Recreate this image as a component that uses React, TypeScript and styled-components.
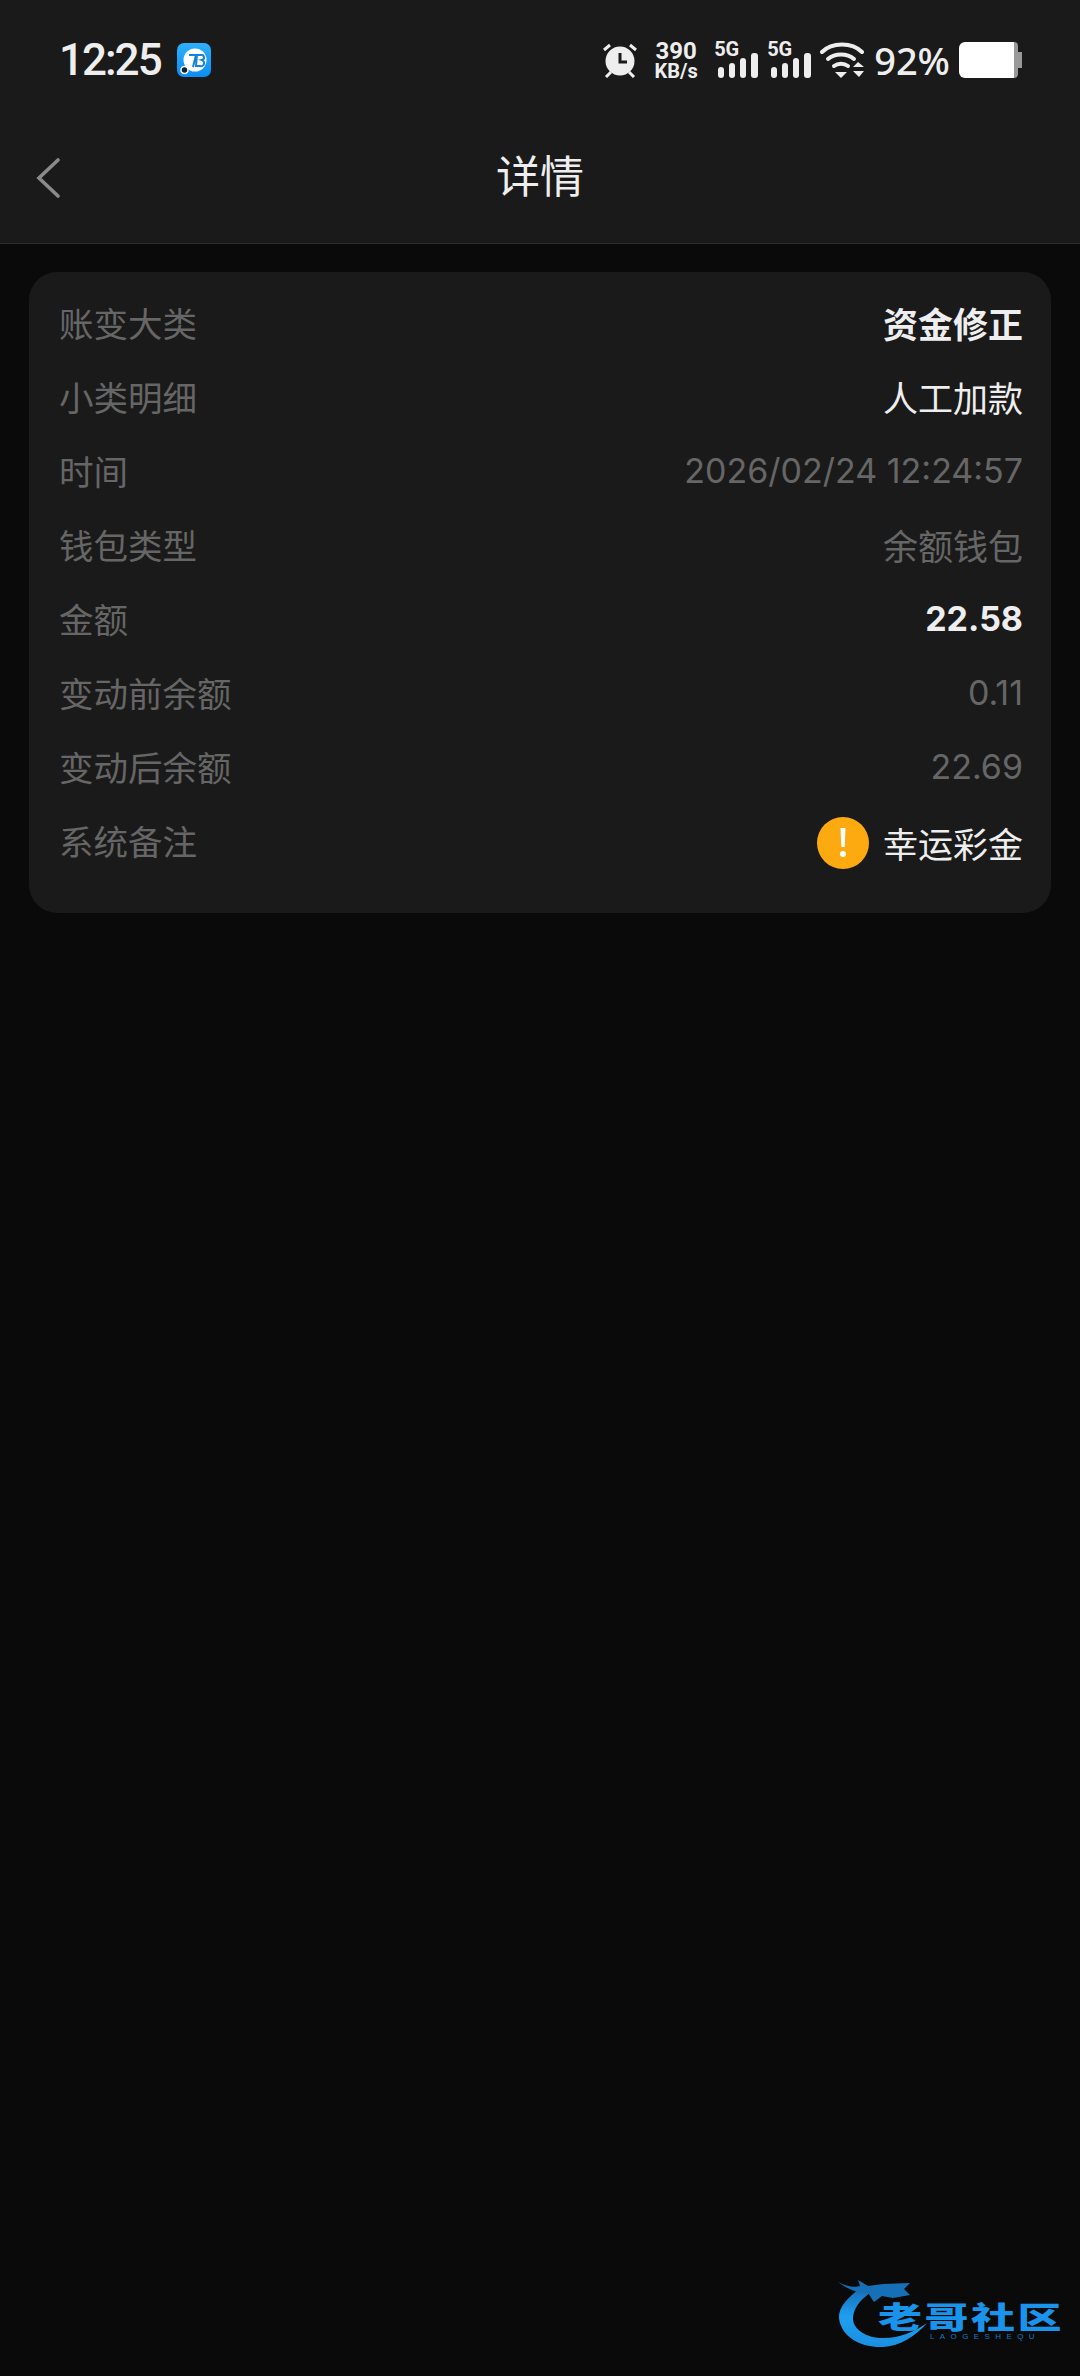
import React, { FC } from "react";
import styled, { createGlobalStyle } from "styled-components";

const CJK = `Inter, "Noto Sans CJK SC", sans-serif`;

type TRow = {
  label: string;
  value: string;
  tone?: "dim" | "light" | "strong";
  numeric?: boolean;
  warn?: boolean;
};

const rows: TRow[] = [
  { label: "账变大类", value: "资金修正", tone: "strong" },
  { label: "小类明细", value: "人工加款", tone: "light" },
  { label: "时间", value: "2026/02/24 12:24:57", numeric: true },
  { label: "钱包类型", value: "余额钱包" },
  { label: "金额", value: "22.58", tone: "strong", numeric: true },
  { label: "变动前余额", value: "0.11", numeric: true },
  { label: "变动后余额", value: "22.69", numeric: true },
  { label: "系统备注", value: "幸运彩金", tone: "light", warn: true },
];

const Signal: FC = () => (
  <SignalWrap>
    <SignalLabel>5G</SignalLabel>
    <svg width="40" height="25" viewBox="0 0 40 25">
      <rect x="0" y="14" width="6" height="11" rx="3" fill="#eee" />
      <rect x="11" y="10" width="6" height="15" rx="3" fill="#eee" />
      <rect x="22" y="5" width="6" height="20" rx="3" fill="#eee" />
      <rect x="33" y="0" width="7" height="25" rx="3" fill="#eee" />
    </svg>
  </SignalWrap>
);

const AlarmIcon: FC = () => (
  <svg width="36" height="36" viewBox="0 0 36 36">
    <circle cx="18" cy="19" r="14.5" fill="#eee" />
    <path d="M18 11v9h7" fill="none" stroke="#1a1a1a" strokeWidth="3" />
    <path
      d="M2 8l6-5M34 8l-6-5M4 35l5-5M32 35l-5-5"
      fill="none"
      stroke="#eee"
      strokeWidth="3"
    />
  </svg>
);

const WifiIcon: FC = () => (
  <svg width="45" height="36" viewBox="0 0 45 36">
    <g fill="none" stroke="#eee" strokeWidth="4" strokeLinecap="round">
      <path d="M2 10C12 0 32 0 42 10" />
      <path d="M8 17c7-6 19-6 26 0" />
      <path d="M14 24c4-3 10-3 14 0" />
    </g>
    <path d="M15 30h12l-6 6z" fill="#eee" />
    <path d="M33 25l5-5 6 5zM33 29h11l-5 6z" fill="#eee" />
  </svg>
);

const BatteryIcon: FC = () => (
  <svg width="63" height="36" viewBox="0 0 63 36">
    <path d="M50 0h5a4 4 0 0 1 4 4v6h4v16h-4v6a4 4 0 0 1-4 4h-5z" fill="#999" />
    <path
      d="M6 0h49a4 4 0 0 0-0 0v36H6a6 6 0 0 1-6-6V6a6 6 0 0 1 6-6z"
      fill="#fff"
    />
  </svg>
);

const AppBadge: FC = () => (
  <svg width="34" height="34" viewBox="0 0 34 34">
    <defs>
      <linearGradient id="badge" x1="0" y1="0" x2="0" y2="1">
        <stop offset="0" stopColor="#2fb0fb" />
        <stop offset="1" stopColor="#0a8ef2" />
      </linearGradient>
    </defs>
    <rect width="34" height="34" rx="7" fill="url(#badge)" />
    <circle cx="18" cy="17" r="11.5" fill="#fff" />
    <path
      d="M12 12h7l-3 12M20 12h4a2.5 2.5 0 0 1 1 5 3 3 0 0 1-2 6h-4z"
      fill="none"
      stroke="#1583d8"
      strokeWidth="2"
    />
    <circle cx="7.5" cy="27" r="3.5" fill="#123" stroke="#fff" strokeWidth="1.5" />
  </svg>
);

const BackIcon: FC = () => (
  <svg width="24" height="40" viewBox="0 0 24 40">
    <path
      d="M22 2L3 20l19 18"
      fill="none"
      stroke="#8a8a8a"
      strokeWidth="3.6"
      strokeLinecap="round"
    />
  </svg>
);

const WarnIcon: FC = () => (
  <svg width="52" height="52" viewBox="0 0 52 52">
    <circle cx="26" cy="26" r="26" fill="#fdaa10" />
    <path d="M23.5 11h5l-.8 19h-3.4z" fill="#fff" />
    <circle cx="26" cy="37" r="3" fill="#fff" />
  </svg>
);

const DragonMark: FC = () => (
  <DragonSvg width="92" height="90" viewBox="0 0 92 90">
    <defs>
      <linearGradient id="dragon" x1="0" y1="0" x2="0" y2="1">
        <stop offset="0" stopColor="#1569b0" />
        <stop offset="0.5" stopColor="#1f9ef0" />
        <stop offset="1" stopColor="#1b8fe0" />
      </linearGradient>
    </defs>
    <path
      d="M26 20C10 30 0 42 1 52c2 20 24 30 44 29 17-1 33-11 44-24-13 9-29 16-47 15-16-1-28-10-27-21 1-9 7-17 17-24z"
      fill="url(#dragon)"
    />
    <path
      d="M0 16c8 4 16 6 22 4l-2-6 10 6 15-2 27-1-6 6 6 6-17 3-11-2-8 6-6-9C20 28 8 22 0 16z"
      fill="#1570b8"
    />
  </DragonSvg>
);

export default function App() {
  return (
    <>
      <GlobalStyle />
      <Page>
        <Header>
          <StatusBar>
            <StatusLeft>
              <Clock>12:25</Clock>
              <AppBadge />
            </StatusLeft>
            <StatusRight>
              <AlarmIcon />
              <Speed>
                <SpeedValue>390</SpeedValue>
                <SpeedUnit>KB/s</SpeedUnit>
              </Speed>
              <Signal />
              <Signal />
              <WifiIcon />
              <BatteryText>92%</BatteryText>
              <BatteryIcon />
            </StatusRight>
          </StatusBar>
          <NavBar>
            <BackButton>
              <BackIcon />
            </BackButton>
            <Title>详情</Title>
          </NavBar>
        </Header>
        <Card>
          {rows.map((row) => (
            <Row key={row.label}>
              <Label>{row.label}</Label>
              <Value $tone={row.tone} $numeric={row.numeric} $warn={row.warn}>
                {row.warn && <WarnIcon />}
                {row.value}
              </Value>
            </Row>
          ))}
        </Card>
        <Watermark>
          <DragonMark />
          <BrandName>老哥社区</BrandName>
          <BrandLatin>LAOGESHEQU</BrandLatin>
        </Watermark>
      </Page>
    </>
  );
}

const GlobalStyle = createGlobalStyle`
  html, body {
    margin: 0;
    padding: 0;
    background: #0a0a0a;
  }
  * {
    box-sizing: border-box;
  }
`;

const Page = styled.div`
  position: relative;
  width: 1080px;
  height: 2376px;
  overflow: hidden;
  background: #0a0a0a;
  font-family: ${CJK};
`;

const Header = styled.header`
  height: 244px;
  background: #1a1a1a;
  border-bottom: 1px solid #2b2b2b;
`;

const StatusBar = styled.div`
  display: flex;
  align-items: center;
  justify-content: space-between;
  height: 120px;
  padding: 0 58px 0 59px;
`;

const StatusLeft = styled.div`
  display: flex;
  align-items: center;
  gap: 16px;
`;

const Clock = styled.div`
  font-family: Roboto, sans-serif;
  font-size: 44px;
  font-weight: 500;
  letter-spacing: -2px;
  color: #eee;
`;

const StatusRight = styled.div`
  display: flex;
  align-items: center;
  gap: 9px;
`;

const Speed = styled.div`
  display: flex;
  flex-direction: column;
  align-items: center;
  width: 44px;
  margin: 0 7px;
  font-family: Roboto, sans-serif;
  font-weight: 700;
  color: #eee;
`;

const SpeedValue = styled.div`
  font-size: 24px;
  line-height: 21px;
`;

const SpeedUnit = styled.div`
  font-size: 20px;
  line-height: 18px;
`;

const SignalWrap = styled.div`
  position: relative;
  display: flex;
  align-items: flex-end;
  justify-content: flex-end;
  width: 44px;
  height: 36px;
`;

const SignalLabel = styled.span`
  position: absolute;
  left: 0;
  top: -3px;
  font-family: Roboto, sans-serif;
  font-size: 20px;
  line-height: 20px;
  font-weight: 700;
  color: #eee;
`;

const BatteryText = styled.div`
  font-family: "Noto Sans", sans-serif;
  font-size: 38px;
  font-weight: 500;
  color: #eee;
`;

const NavBar = styled.div`
  position: relative;
  display: flex;
  align-items: center;
  justify-content: center;
  height: 124px;
  padding-bottom: 11px;
`;

const BackButton = styled.div`
  position: absolute;
  left: 36px;
  top: 38px;
  display: flex;
`;

const Title = styled.h1`
  margin: 0;
  font-size: 44px;
  font-weight: 400;
  line-height: 60px;
  color: #eee;
`;

const Card = styled.section`
  display: flex;
  flex-direction: column;
  margin: 28px 29px 0 29px;
  padding: 13px 28px 36px 30px;
  border-radius: 28px;
  background: #1a1a1a;
`;

const Row = styled.div`
  display: flex;
  align-items: center;
  justify-content: space-between;
  height: 74px;
`;

const Label = styled.span`
  font-size: 34.5px;
  color: #666;
`;

const toneColor = { dim: "#666", light: "#eee", strong: "#eee" };

const Value = styled.span<{
  $tone?: TRow["tone"];
  $numeric?: boolean;
  $warn?: boolean;
}>`
  display: flex;
  align-items: center;
  gap: 14px;
  padding-top: ${(p) => (p.$warn ? "5px" : "0")};
  font-size: ${(p) => (p.$numeric ? "34px" : "35px")};
  font-weight: ${(p) => (p.$tone === "strong" ? 700 : 400)};
  color: ${(p) => toneColor[p.$tone || "dim"]};
`;

const Watermark = styled.div`
  position: absolute;
  left: 838px;
  top: 2278px;
  width: 230px;
  height: 90px;
`;

const DragonSvg = styled.svg`
  position: absolute;
  left: 0;
  top: -12px;
`;

const BrandName = styled.div`
  position: absolute;
  left: 40px;
  top: 15px;
  font-family: "Noto Sans CJK SC", sans-serif;
  font-size: 44px;
  line-height: 44px;
  font-weight: 900;
  letter-spacing: 2.5px;
  white-space: nowrap;
  color: #1a93ea;
  transform: scaleY(0.68);
`;

const BrandLatin = styled.div`
  position: absolute;
  left: 92px;
  top: 54px;
  font-family: "Liberation Sans", sans-serif;
  font-size: 8px;
  line-height: 10px;
  letter-spacing: 5.4px;
  white-space: nowrap;
  color: #1678c6;
`;
